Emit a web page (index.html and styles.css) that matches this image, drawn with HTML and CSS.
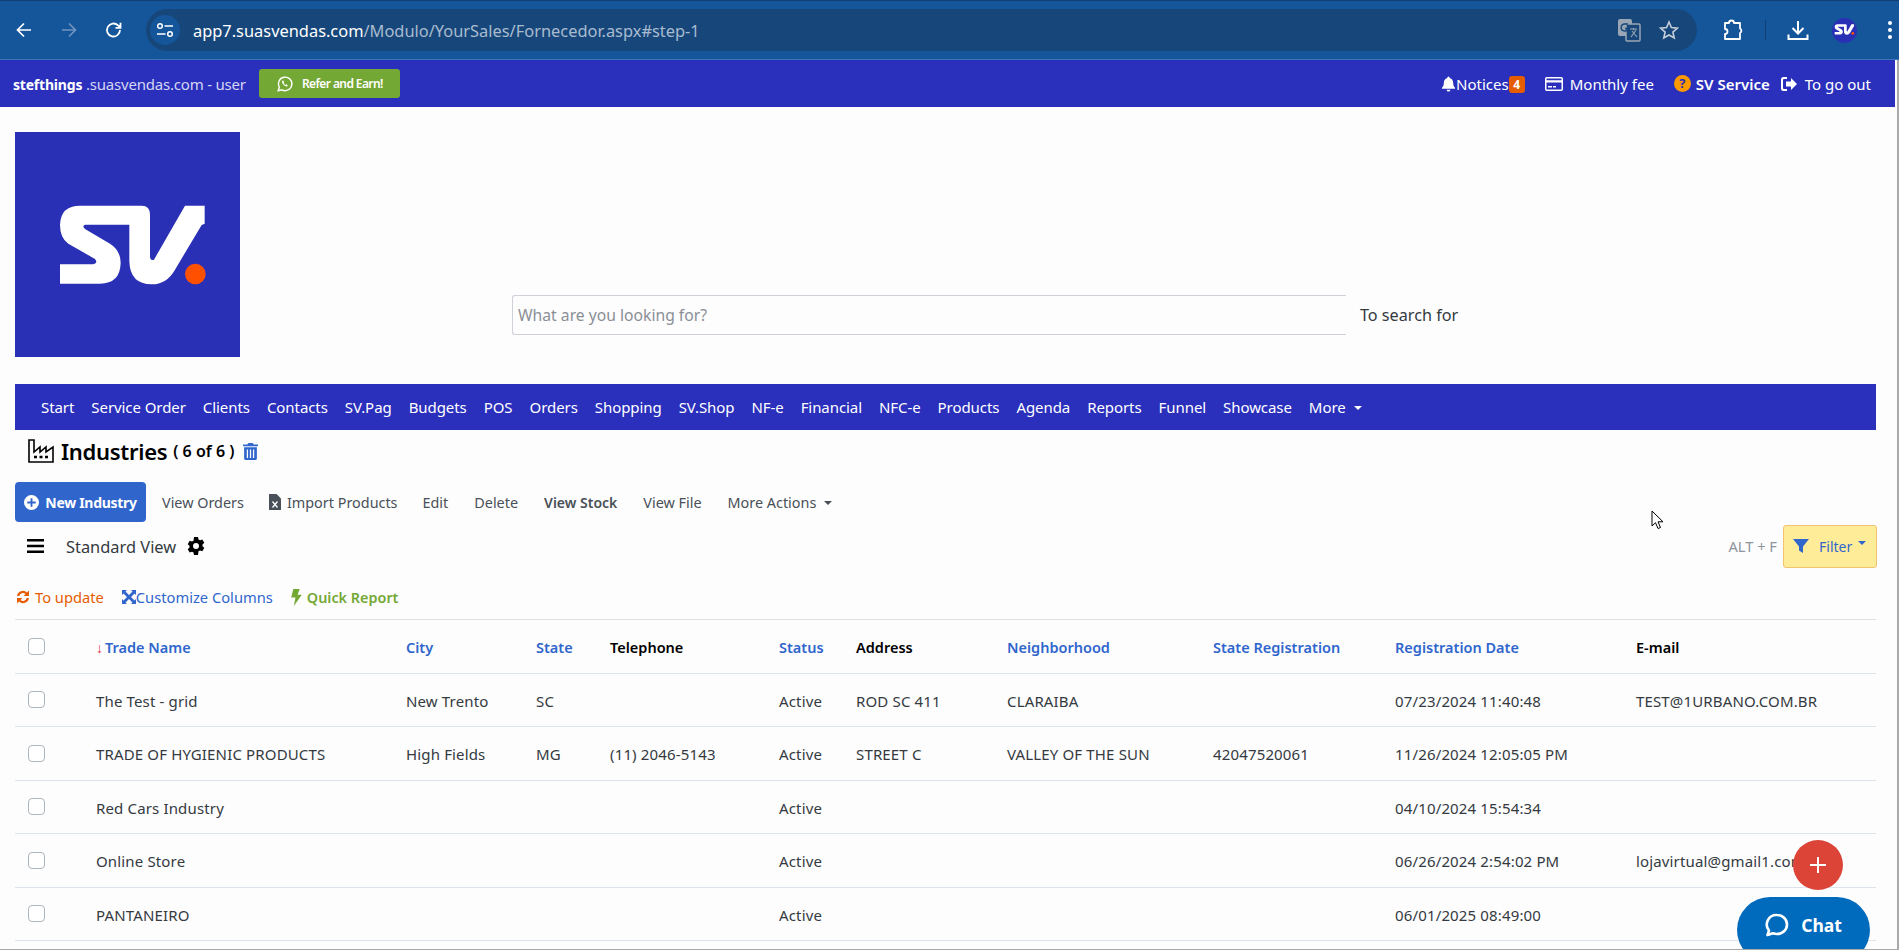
FILE: index.html
```html
<!DOCTYPE html>
<html lang="en">
<head>
<meta charset="utf-8">
<title>Industries</title>
<link rel="stylesheet" href="styles.css">
</head>
<body>
<svg class="defs" width="0" height="0" aria-hidden="true"><defs>
<path id="sv" d="M240 258L425 258Q450 258 450 285L450 410Q450 424 462 420L555 258L614 258L614 312L605 316L525 450Q500 494 455 494Q390 494 388 425L388 315L255 315Q245 318 255 328L330 372Q362 392 362 430Q360 492 300 492L180 492L180 434L280 434Q295 430 285 418L205 372Q180 355 180 315Q182 258 240 258Z"/>
</defs></svg>

<header class="browser">
  <div class="browser-nav">
    <svg class="b-ico" viewBox="0 0 20 20"><path d="M17 10H3.500M10 3.500L3.500 10l6.500 6.500" fill="none" stroke="#fff" stroke-width="1.700"/></svg>
    <svg class="b-ico" viewBox="0 0 20 20"><path d="M3 10h13.500M10 3.500l6.500 6.500-6.500 6.500" fill="none" stroke="#6f94c1" stroke-width="1.700"/></svg>
    <svg class="b-ico" viewBox="0 0 20 20"><path d="M16 10a6.500 6.500 0 1 1-2-4.700L16.300 7.500M16.500 2.800v5h-5" fill="none" stroke="#fff" stroke-width="1.800"/></svg>
  </div>
  <div class="omnibox">
    <span class="tune"><svg viewBox="0 0 20 20" width="20" height="20"><circle cx="5" cy="6" r="2.300" fill="none" stroke="#fff" stroke-width="1.500"/><path d="M9.500 6H18M2 14h8.500" stroke="#fff" stroke-width="1.500"/><circle cx="15" cy="14" r="2.300" fill="none" stroke="#fff" stroke-width="1.500"/></svg></span>
    <span class="url"><span class="url-host">app7.suasvendas.com</span>/Modulo/YourSales/Fornecedor.aspx#step-1</span>
    <svg class="translate" viewBox="0 0 24 24" width="24" height="24"><rect x="1" y="1" width="14" height="17" rx="2" fill="#9aa6b4"/><rect x="9" y="6" width="14" height="17" rx="1" fill="#17477a" stroke="#9aa6b4" stroke-width="1.500"/><path d="M11 6H8a3.500 3.500 0 1 0 3 4.500H8" fill="none" stroke="#17477a" stroke-width="1.400"/><path d="M13 11h7M16.500 10v2M14 19l5-7M15 13l5 6" stroke="#9aa6b4" stroke-width="1.100" fill="none"/></svg>
    <svg class="star" viewBox="0 0 20 20" width="20" height="20"><path d="M10 2l2.400 5.500 6 .6-4.500 4 1.300 5.900L10 15l-5.200 3 1.300-5.900-4.500-4 6-.6z" fill="none" stroke="#c5ced9" stroke-width="1.600"/></svg>
  </div>
  <div class="browser-tools">
    <svg class="ext" viewBox="0 0 22 22" width="22" height="22"><path d="M3 4h4a2.500 2.500 0 0 1 5 0h6v5.500a2.500 2.500 0 0 1 0 4.500V20H3v-5a2.500 2.500 0 0 0 0-5z" fill="none" stroke="#fff" stroke-width="1.800" stroke-linejoin="round"/></svg>
    <span class="tool-sep"></span>
    <svg class="dl" viewBox="0 0 22 22" width="22" height="22"><path d="M11 2v12M5.500 9l5.500 5.500L16.500 9M1.500 15.500V20h19v-4.500" fill="none" stroke="#fff" stroke-width="2"/></svg>
    <svg class="avatar" viewBox="120 120 560 560" width="25" height="25"><circle cx="400" cy="400" r="280" fill="#2a30b5"/><use href="#sv" fill="#fff"/><circle cx="586" cy="463" r="31" fill="#ff5000"/></svg>
    <svg class="dots" viewBox="0 0 4 20" width="4" height="20"><circle cx="2" cy="3" r="2" fill="#fff"/><circle cx="2" cy="10" r="2" fill="#fff"/><circle cx="2" cy="17" r="2" fill="#fff"/></svg>
  </div>
</header>

<div class="page">
  <div class="main">
    <div class="topbar">
      <div class="topbar-left">
        <span class="account"><b>stefthings</b> .suasvendas.com - user</span>
        <a class="refer"><svg viewBox="0 0 20 20" width="18" height="18"><path d="M2.500 17.500l1.100-4A7.500 7.500 0 1 1 6.500 16.400z" fill="none" stroke="#fff" stroke-width="1.600"/><path d="M7.300 6.200c-1 .8-.9 2.400.6 4.200 1.600 1.900 3.400 2.700 4.500 2.100l.8-1-1.700-1.100-.8.600c-.8-.3-1.800-1.300-2.200-2.200l.6-.8-1-1.900z" fill="#fff"/></svg>Refer and Earn!</a>
      </div>
      <nav class="topbar-right">
        <a class="notices"><svg viewBox="0 0 16 16" width="15" height="16"><path d="M8 0a1.500 1.500 0 0 0-1.300 1.600C4.300 2.200 3 4 3 7c0 3-1 4-2 5v1h14v-1c-1-1-2-2-2-5 0-3-1.300-4.800-3.700-5.400A1.500 1.500 0 0 0 8 0zM6 14a2 2 0 0 0 4 0z" fill="#fff"/></svg>Notices<span class="badge">4</span></a>
        <a class="monthly"><svg viewBox="0 0 18 14" width="18" height="14"><path d="M1.700 0h14.600A1.700 1.700 0 0 1 18 1.700v10.600a1.700 1.700 0 0 1-1.700 1.700H1.700A1.700 1.700 0 0 1 0 12.300V1.700A1.700 1.700 0 0 1 1.700 0zm-.2 1.500v1.800h15V1.500zm0 4v7h15v-7zM3 9h4v1.500H3zm5 0h3v1.500H8z" fill="#fff" fill-rule="evenodd"/></svg>Monthly fee</a>
        <a class="service"><span class="help">?</span>SV Service</a>
        <a class="logout"><svg viewBox="0 0 16 14" width="16" height="14"><path d="M6 0v2H3a1 1 0 0 0-1 1v8a1 1 0 0 0 1 1h3v2H2.500A2.500 2.500 0 0 1 0 11.500v-9A2.500 2.500 0 0 1 2.500 0zM10 1l6 6-6 6V9.500H5v-5h5z" fill="#fff"/></svg>To go out</a>
      </nav>
    </div>

    <div class="content">
      <div class="brand-row">
        <svg class="logo" viewBox="45 37 675 675"><rect x="45" y="37" width="675" height="675" fill="#2a30b5"/><use href="#sv" fill="#fff"/><circle cx="586" cy="463" r="31" fill="#ff5000"/></svg>
        <form class="search">
          <input class="search-input" type="text" placeholder="What are you looking for?">
          <span class="search-btn">To search for</span>
        </form>
      </div>

      <nav class="menu">
        <a>Start</a><a>Service Order</a><a>Clients</a><a>Contacts</a><a>SV.Pag</a><a>Budgets</a><a>POS</a><a>Orders</a><a>Shopping</a><a>SV.Shop</a><a>NF-e</a><a>Financial</a><a>NFC-e</a><a>Products</a><a>Agenda</a><a>Reports</a><a>Funnel</a><a>Showcase</a><a class="menu-more">More</a>
      </nav>

      <div class="title-row">
        <svg class="title-ico" viewBox="0 0 26 24" width="26" height="24"><path d="M1 1h5v12l6-5v5l6-5v5l7-5v15H1z" fill="none" stroke="#000" stroke-width="1.600" stroke-linejoin="miter"/><path d="M6 18h3M11.500 18h3M17 18h3" stroke="#000" stroke-width="2.400"/></svg>
        <h1>Industries</h1>
        <span class="count">( 6 of 6 )</span>
        <svg class="trash" viewBox="0 0 14 16" width="15" height="17"><path d="M5 0h4l1 1.500h4V3H0V1.500h4zM1 4h12v10.500a1.500 1.500 0 0 1-1.500 1.500h-9A1.500 1.500 0 0 1 1 14.500zm2.500 2v8h1.200V6zm2.900 0v8h1.200V6zm2.900 0v8h1.200V6z" fill="#3066cc" fill-rule="evenodd"/></svg>
      </div>

      <div class="actions">
        <a class="btn-new"><svg viewBox="0 0 16 16" width="15" height="15"><path d="M8 0a8 8 0 1 1 0 16A8 8 0 0 1 8 0zM7 3.500V7H3.500v2H7v3.500h2V9h3.500V7H9V3.500z" fill="#fff" fill-rule="evenodd"/></svg>New Industry</a>
        <a class="act">View Orders</a>
        <a class="act act-import"><svg viewBox="0 0 12 16" width="12" height="16"><path d="M0 0h7.500L12 4.500V16H0z" fill="#495057"/><path d="M3.500 7.500l5 6M8.500 7.500l-5 6" stroke="#fff" stroke-width="1.300"/></svg>Import Products</a>
        <a class="act">Edit</a>
        <a class="act">Delete</a>
        <a class="act act-strong">View Stock</a>
        <a class="act">View File</a>
        <a class="act act-more">More Actions</a>
      </div>

      <div class="view-row">
        <div class="view-left">
          <svg class="burger" viewBox="0 0 17 14" width="17" height="14"><path d="M0 1.250h17M0 7h17M0 12.750h17" stroke="#000" stroke-width="2.400"/></svg>
          <span class="view-name">Standard View</span>
          <svg class="gear" viewBox="0 0 18 18" width="18" height="18"><path fill-rule="evenodd" d="M7 0h4l.5 2.400 1.500.8 2.300-.8 2 3.400-1.800 1.600v1.800l1.800 1.600-2 3.400-2.300-.8-1.500.8L11 18H7l-.5-2.400-1.500-.8-2.300.8-2-3.400 1.800-1.600V8.800L.7 7.200 2.700 3.800 5 4.600l1.500-.8zM9 6a3 3 0 1 0 0 6 3 3 0 0 0 0-6z" fill="#000"/></svg>
        </div>
        <div class="view-right">
          <span class="shortcut">ALT + F</span>
          <a class="btn-filter"><svg viewBox="0 0 16 16" width="16" height="16"><path d="M0 1h16L10 8.500V15l-4-2.500V8.500z" fill="#3066cc"/></svg>Filter</a>
        </div>
      </div>

      <div class="links">
        <a class="lnk lnk-update"><svg viewBox="0 0 16 16" width="16" height="16"><path d="M2 7a6 6 0 0 1 10-3.500L14 1.500V7H8.500l2-2A4 4 0 0 0 4.200 7zM14 9a6 6 0 0 1-10 3.500L2 14.500V9h5.500l-2 2a4 4 0 0 0 6.300-2z" fill="#e65c00"/></svg>To update</a>
        <a class="lnk lnk-custom"><svg viewBox="0 0 14 14" width="14" height="14"><path d="M0 0h5L3.500 1.500 7 5l3.500-3.500L9 0h5v5l-1.500-1.500L9 7l3.500 3.500L14 9v5H9l1.500-1.500L7 9l-3.500 3.500L5 14H0V9l1.500 1.500L5 7 1.500 3.500 0 5z" fill="#3066cc"/></svg>Customize Columns</a>
        <a class="lnk lnk-quick"><svg viewBox="0 0 10 16" width="11" height="17"><path d="M2 0h6L6 5.500h4L2.500 16 4 8H0z" fill="#74a835"/></svg>Quick Report</a>
      </div>

      <table class="grid">
        <colgroup><col class="c-check"><col class="c-name"><col class="c-city"><col class="c-state"><col class="c-tel"><col class="c-status"><col class="c-addr"><col class="c-hood"><col class="c-reg"><col class="c-date"><col class="c-mail"></colgroup>
        <thead>
          <tr>
            <th class="cell-check"><input type="checkbox" class="check"></th>
            <th class="link"><span class="sort">↓</span>Trade Name</th>
            <th class="link">City</th>
            <th class="link">State</th>
            <th>Telephone</th>
            <th class="link">Status</th>
            <th>Address</th>
            <th class="link">Neighborhood</th>
            <th class="link">State Registration</th>
            <th class="link">Registration Date</th>
            <th>E-mail</th>
          </tr>
        </thead>
        <tbody>
          <tr><td class="cell-check"><input type="checkbox" class="check"></td><td>The Test - grid</td><td>New Trento</td><td>SC</td><td></td><td>Active</td><td>ROD SC 411</td><td>CLARAIBA</td><td></td><td>07/23/2024 11:40:48</td><td>TEST@1URBANO.COM.BR</td></tr>
          <tr><td class="cell-check"><input type="checkbox" class="check"></td><td>TRADE OF HYGIENIC PRODUCTS</td><td>High Fields</td><td>MG</td><td>(11) 2046-5143</td><td>Active</td><td>STREET C</td><td>VALLEY OF THE SUN</td><td>42047520061</td><td>11/26/2024 12:05:05 PM</td><td></td></tr>
          <tr><td class="cell-check"><input type="checkbox" class="check"></td><td>Red Cars Industry</td><td></td><td></td><td></td><td>Active</td><td></td><td></td><td></td><td>04/10/2024 15:54:34</td><td></td></tr>
          <tr><td class="cell-check"><input type="checkbox" class="check"></td><td>Online Store</td><td></td><td></td><td></td><td>Active</td><td></td><td></td><td></td><td>06/26/2024 2:54:02 PM</td><td>lojavirtual@gmail1.com</td></tr>
          <tr><td class="cell-check"><input type="checkbox" class="check"></td><td>PANTANEIRO</td><td></td><td></td><td></td><td>Active</td><td></td><td></td><td></td><td>06/01/2025 08:49:00</td><td></td></tr>
        </tbody>
      </table>
    </div>
  </div>
  <div class="gutter"></div>
</div>

<svg class="cursor" viewBox="0 0 13 20" width="13" height="20"><path d="M1 1v15l3.500-3.300 2.500 5.800 2.500-1-2.500-5.700H12z" fill="#fff" stroke="#000" stroke-width="1"/></svg>
<a class="fab"><svg viewBox="0 0 18 18" width="18" height="18"><path d="M9 1v16M1 9h16" stroke="#fff" stroke-width="2"/></svg></a>
<a class="chat"><svg viewBox="0 0 24 24" width="24" height="24"><path d="M12 2a10 9.500 0 0 1 0 19c-1.500 0-3-.3-4-.8L2.500 22l1.500-4.500A9.500 9.500 0 0 1 12 2z" fill="none" stroke="#fff" stroke-width="2.600" stroke-linejoin="round"/></svg>Chat</a>
<div class="bottom-line"></div>
</body>
</html>
```

FILE: styles.css
```css
* { box-sizing: border-box; }
html, body { margin: 0; height: 950px; overflow: hidden; }
body { background: #fdfdfe; font-family: "Noto Sans", "Open Sans", sans-serif; font-size: 14px; color: #343a40; }
a { color: inherit; text-decoration: none; }
.defs { position: absolute; }

.browser { height: 60px; background: #15569b; border-top: 1px solid #0f3f75; border-bottom: 1px solid #3d76b8; display: flex; align-items: center; }
.browser-nav { width: 146px; display: flex; gap: 25px; padding-left: 14px; }
.b-ico { width: 20px; height: 20px; }
.omnibox { width: 1551px; height: 42px; border-radius: 21px; background: #17477a; display: flex; align-items: center; }
.tune { width: 30px; height: 30px; margin-left: 4px; border-radius: 50%; background: #15569b; display: flex; align-items: center; justify-content: center; }
.url { margin-left: 13px; padding-top: 1px; font-size: 16.400px; color: #a9bbd0; flex: 1; }
.url-host { color: #fff; }
.translate { margin-right: 18px; }
.star { margin-right: 18px; }
.browser-tools { flex: 1; display: flex; align-items: center; padding-left: 25px; }
.tool-sep { width: 1px; height: 20px; background: #0f3f75; margin: 0 21px; }
.avatar { margin-left: 23px; }
.dots { margin-left: 31px; }

.page { display: flex; height: 890px; }
.main { width: 1895px; }
.gutter { flex: 1; background: #fdfdfe; border-right: 2px solid #a9a9a9; }

.topbar { height: 47px; background: #2a2fbc; color: #fff; display: flex; justify-content: space-between; align-items: center; padding: 0 24px 0 13px; }
.topbar-left { display: flex; align-items: center; }
.account { color: #d4d6f2; font-size: 15px; letter-spacing: -0.200px; }
.account b { color: #fff; font-weight: 700; font-size: 14px; }
.refer { margin-left: 13px; width: 141px; height: 29px; border-radius: 3px; background: #74a835; display: flex; align-items: center; justify-content: center; gap: 8px; color: #fff; font-size: 12px; font-weight: 600; letter-spacing: -0.600px; }
.topbar-right { display: flex; align-items: center; font-size: 15px; }
.topbar-right a { display: flex; align-items: center; }
.notices { margin-right: 20px; }
.badge { width: 16px; height: 17px; border-radius: 3px; background: #e65c00; font-size: 12px; font-weight: 700; text-align: center; line-height: 17px; margin-top: 2px; }
.monthly svg { margin-right: 7px; }
.monthly { margin-right: 20px; }
.help { width: 17px; height: 17px; border-radius: 50%; background: #ff9900; color: #2a2fbc; font-weight: 700; font-size: 13px; line-height: 17px; text-align: center; margin-right: 5px; }
.service { font-weight: 600; margin-right: 11px; }
.logout svg { margin-right: 8px; }

.content { padding: 0 19px 0 15px; }
.brand-row { height: 277px; padding: 25px 0 27px; display: flex; align-items: flex-end; }
.logo { width: 225px; height: 225px; flex: none; }
.search { display: flex; align-items: center; margin: 0 0 22px 272px; }
.search-input { width: 834px; height: 40px; border: 1px solid #cfd0d8; border-right: 0; border-radius: 3px 0 0 3px; background: transparent; padding: 0 5px; font: 15.700px "Noto Sans", sans-serif; color: #343a40; }
.search-input::placeholder { color: #8a8f96; opacity: 1; }
.search-btn { margin-left: 14px; font-size: 16.200px; color: #343a40; }

.menu { height: 46px; background: #2a2fbc; color: #fff; display: flex; align-items: center; gap: 17px; padding-left: 26px; font-size: 15px; letter-spacing: -0.070px; }
.menu-more::after, .act-more::after { content: ""; display: inline-block; margin-left: 8px; vertical-align: 3px; border: 4px solid transparent; border-top-color: currentColor; border-bottom: 0; }

.title-row { height: 52px; display: flex; align-items: center; padding: 0 0 10px 13px; color: #000; }
h1 { margin: 0 0 0 7px; font-size: 22px; font-weight: 600; letter-spacing: -0.300px; }
.count { margin-left: 6px; font-size: 16px; font-weight: 600; }
.trash { margin-left: 9px; }

.actions { height: 40px; display: flex; align-items: center; color: #495057; font-size: 14.400px; }
.btn-new { width: 131px; height: 40px; background: #3066cc; color: #fff; font-weight: 700; border-radius: 4px; display: flex; align-items: center; justify-content: center; gap: 6px; font-size: 14px; letter-spacing: -0.300px; }
.act { margin-left: 26px; }
.btn-new + .act { margin-left: 16px; }
.act-import { margin-left: 25px; display: inline-flex; align-items: center; gap: 6px; }
.act-import + .act { margin-left: 25px; }
.act-strong { font-weight: 600; font-size: 14px; }

.view-row { height: 46px; padding-top: 2px; display: flex; justify-content: space-between; align-items: center; }
.view-left { display: flex; align-items: center; padding-left: 12px; color: #343a40; font-size: 16.400px; }
.view-name { margin-left: 22px; }
.gear { margin-left: 11px; }
.view-right { display: flex; align-items: center; }
.shortcut { color: #8e959c; font-size: 14.700px; margin-right: 6px; }
.btn-filter { width: 94px; height: 43px; margin-right: -1px; border: 1px solid #f2c36f; border-radius: 3px; background: #ffec99; color: #3066cc; display: flex; align-items: center; padding-left: 9px; gap: 10px; font-size: 14px; }
.btn-filter::after { content: ""; margin-left: -4px; margin-bottom: 6px; border: 4px solid transparent; border-top-color: currentColor; border-bottom: 0; }

.links { height: 51px; padding-top: 7px; display: flex; align-items: center; gap: 18px; font-size: 14.700px; }
.lnk { display: flex; align-items: center; }
.lnk-update { color: #e65c00; gap: 4px; }
.lnk-custom { color: #3066cc; }
.lnk-quick { color: #74a835; font-weight: 600; gap: 5px; font-size: 14.400px; }

.grid { width: 1861px; table-layout: fixed; border-collapse: collapse; border-top: 1px solid #dee2e6; }
.c-check { width: 81px; } .c-name { width: 310px; } .c-city { width: 130px; } .c-state { width: 74px; } .c-tel { width: 169px; }
.c-status { width: 77px; } .c-addr { width: 151px; } .c-hood { width: 206px; } .c-reg { width: 182px; } .c-date { width: 241px; } .c-mail { width: 240px; }
.grid tr { height: 53.500px; }
.grid th, .grid td { padding: 2px 0 0; text-align: left; font-size: 15px; letter-spacing: 0.150px; border-bottom: 1px solid #dde3ea; white-space: nowrap; overflow: visible; }
.grid th { color: #000; font-weight: 600; font-size: 14.500px; letter-spacing: 0; }
.grid th.link { color: #3066cc; }
.sort { color: #dc3545; font-size: 14px; margin-right: 2px; font-weight: 700; }
.grid .cell-check { padding: 0 0 0 13px; }
.check { appearance: none; width: 17px; height: 17px; margin: 0; border: 1px solid #adb5bd; border-radius: 4px; background: #fff; display: block; }

.cursor { position: fixed; left: 1651px; top: 510px; }
.fab { position: fixed; left: 1793px; top: 840px; width: 50px; height: 50px; border-radius: 50%; background: #db4437; display: flex; align-items: center; justify-content: center; }
.chat { position: fixed; left: 1737px; top: 897px; width: 133px; height: 66px; border-radius: 33px; background: #006bbd; color: #fff; display: flex; align-items: flex-start; justify-content: center; gap: 12px; padding-top: 16px; font-size: 17.500px; font-weight: 700; line-height: 24px; }
.bottom-line { position: fixed; left: 0; right: 0; bottom: 0; height: 1px; background: #a9a9a9; }
```
